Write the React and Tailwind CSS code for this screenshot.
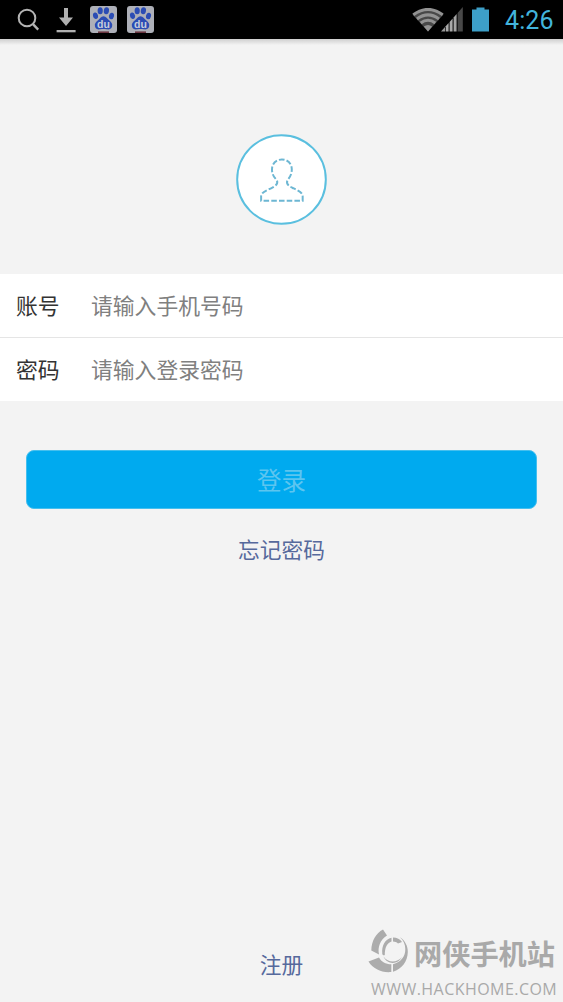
function SearchIcon() {
  return (
    <svg className="ml-[17px] h-[24px] w-[23px]" viewBox="0 0 23 24" fill="none" stroke="#b4b4b4">
      <circle cx="10" cy="10" r="8.3" strokeWidth="2" />
      <path d="M16 16.2L21.2 21.6" strokeWidth="2.4" />
    </svg>
  );
}

function DownloadIcon() {
  return (
    <svg className="ml-[16px] h-[26px] w-[20px]" viewBox="0 0 20 26" fill="#b0b0b0">
      <path d="M8 1h4v9.5h5L10 19 3 10.5h5z" />
      <rect x="0.6" y="23" width="19" height="2.3" />
    </svg>
  );
}

function PawIcon({ className }) {
  return (
    <svg className={`h-[27px] w-[27px] ${className}`} viewBox="0 0 27 27">
      <rect width="27" height="27" rx="3" fill="#aeb0b8" />
      <g fill="#2b4cb4">
        <ellipse cx="5.5" cy="9.7" rx="2.5" ry="3.3" transform="rotate(-12 5.5 9.7)" />
        <ellipse cx="10.2" cy="4.8" rx="2.6" ry="3.5" />
        <ellipse cx="16.4" cy="4.8" rx="2.6" ry="3.5" transform="rotate(10 16.4 4.8)" />
        <ellipse cx="21.5" cy="10" rx="2.5" ry="3.3" transform="rotate(12 21.5 10)" />
        <path d="M13.5 10.2c2.7 0 3.7 2.4 5.6 4.1 2 1.7 3.8 3.5 3 6.3-.9 3-3.5 3-5.6 2.7-2-.3-4-.3-6 0-2.3.4-4.7.2-5.5-2.7-.8-2.8 1-4.6 3-6.3 1.9-1.7 2.8-4.1 5.5-4.1z" />
      </g>
      <rect x="8" y="25.4" width="11" height="1.6" fill="#6b3540" />
      <text x="13.5" y="21.5" textAnchor="middle" fontFamily="Liberation Sans, sans-serif" fontSize="10.5" fontWeight="bold" fill="#c6ccdc">du</text>
    </svg>
  );
}

function WifiIcon() {
  return (
    <svg className="h-[24px] w-[32px]" viewBox="0 0 32 24" fill="none">
      <path d="M0.5 6.5Q16-5 31.5 6.5L16 23.5z" fill="#484848" />
      <g stroke="#929292" strokeWidth="3">
        <path d="M1.3 6.8Q16-4 30.7 6.8" />
        <path d="M5 11Q16 2.8 27 11" />
        <path d="M8.7 15Q16 9.6 23.3 15" />
      </g>
      <path d="M11.8 18.6Q16 15.6 20.2 18.6L16 23.5z" fill="#929292" />
    </svg>
  );
}

function SignalIcon() {
  return (
    <svg className="-ml-[3px] h-[25px] w-[22px]" viewBox="0 0 22 25">
      <path d="M0 24.5L4 20V24.5z" fill="#999" />
      <path d="M4.7 19.3L7.6 16V24.5H4.7z" fill="#aaa" />
      <path d="M8.6 15L11.6 11.6V24.5H8.6z" fill="#aaa" />
      <path d="M12.6 10.5L15.6 7V24.5H12.6z" fill="#a5a5a5" />
      <path d="M16.6 6L21.8 0V24.5H16.6z" fill="#484848" />
    </svg>
  );
}

function BatteryIcon() {
  return (
    <svg className="ml-[9px] h-[25px] w-[17px]" viewBox="0 0 17 25" fill="#3d9fc8">
      <path d="M4.5 0.5h8v2H17v22H0v-22h4.5z" />
    </svg>
  );
}

function StatusBar() {
  return (
    <header className="flex h-[39px] shrink-0 items-center bg-black">
      <SearchIcon />
      <DownloadIcon />
      <PawIcon className="ml-[14px]" />
      <PawIcon className="ml-[10px]" />
      <div className="ml-auto flex items-center pr-[10px]">
        <WifiIcon />
        <SignalIcon />
        <BatteryIcon />
        <span className="ml-[16px] w-[48px] whitespace-nowrap pt-[2px] font-['Roboto',sans-serif] text-[25px] leading-[30px] tracking-[0.1px] text-[#42b4dc]">4:26</span>
      </div>
    </header>
  );
}

function Avatar() {
  return (
    <svg className="mx-auto h-[91px] w-[91px]" viewBox="0 0 92 92" fill="none">
      <circle cx="46" cy="46" r="44.8" fill="#fff" stroke="#5abfdf" strokeWidth="2" />
      <path
        d="M46.4 25.8C52.4 25.8 56.4 29.9 56.4 35.9C56.4 41.4 53.9 44.2 51.9 46.9C50.4 50.9 53.9 52.9 57.4 54.6C62.4 56.9 67.4 58.9 67.4 62.9V67.4H25.4V62.9C25.4 58.9 31.4 56.9 35.9 54.6C39.4 52.9 42.9 50.9 41.4 46.9C38.9 44.2 36.4 41.4 36.4 35.9C36.4 29.9 40.4 25.8 46.4 25.8Z"
        stroke="#6db7d3"
        strokeWidth="2"
        strokeDasharray="5.6 2.2"
        strokeDashoffset="3"
      />
    </svg>
  );
}

function Field({ label, placeholder, className }) {
  return (
    <label className={`flex items-center bg-white pb-px pl-[16px] text-[21.8px] leading-[32px] ${className}`}>
      <span className="w-[75px] text-[#333]">{label}</span>
      <span className="text-[#808080]">{placeholder}</span>
    </label>
  );
}

function Watermark() {
  return (
    <div className="absolute top-[929px] left-[368px] w-[190px] text-[#a9a9a9]">
      <div className="flex h-[45px]">
        <svg className="h-[45px] w-[41px] shrink-0" viewBox="0 0 41 45" fill="#acacac">
          <path d="M15 0.5L19 6.5C12 11 9.5 18 11 25.5L3.3 21.5C3.5 12 8 4 15 0.5Z" />
          <path d="M0.5 32.5L11 28.5C13.5 33 17.5 35.2 23.3 35.3V43C14 44 5 40 0.5 32.5Z" />
          <path d="M32 8.2C37 11.5 40 17 39.8 23C39.5 32.5 34 40 25 42.8V35.3C33 33 37.5 27.5 37.3 20C37.2 15 35.5 11.5 32 8.2Z" />
          <path d="M14.3 25C13.5 16 17 10.5 23.5 8.7V12.6C19 14.5 16.8 18.5 16.8 26C15.8 26.8 14.6 26 14.3 25Z" />
          <path d="M25 8.5C29 8.6 32 10 34 13L30 14.5C28.5 13.2 27 12.8 25 12.6Z" />
          <path d="M15.5 27.5C20 34 29 34 34 28C30 36 19 36 15.5 27.5Z" />
        </svg>
        <span className="ml-[5px] mt-[7px] whitespace-nowrap text-[28.2px] leading-[34px] font-bold">网侠手机站</span>
      </div>
      <div className="ml-[3px] mt-[5px] whitespace-nowrap font-['Open_Sans',sans-serif] text-[16px] leading-[20px] font-medium tracking-[0.45px]">WWW.HACKHOME.COM</div>
    </div>
  );
}

export default function App() {
  return (
    <div className="relative flex h-[1002px] w-[563px] flex-col overflow-hidden bg-[#f3f3f3] font-['Noto_Sans_CJK_SC',sans-serif]">
      <StatusBar />
      <div className="h-[6px] shrink-0 bg-linear-to-b from-[#cfcfcf] to-[#f3f3f3]" />
      <main className="flex flex-1 flex-col">
        <div className="h-[229px] shrink-0 pt-[89px]">
          <Avatar />
        </div>
        <Field label="账号" placeholder="请输入手机号码" className="h-[64px] border-b border-[#e5e5e5]" />
        <Field label="密码" placeholder="请输入登录密码" className="h-[63px]" />
        <button className="mx-[26px] mt-[49px] h-[59px] shrink-0 rounded-[8px] border border-[#45bfee] bg-[#00aaef] text-[24.5px] leading-[36px] text-[#5cc5ef]">登录</button>
        <a className="mt-[24px] self-center text-[21.7px] leading-[32px] text-[#56699c]">忘记密码</a>
        <a className="mt-auto mb-[22px] self-center text-[21.7px] leading-[32px] text-[#56699c]">注册</a>
      </main>
      <Watermark />
    </div>
  );
}
